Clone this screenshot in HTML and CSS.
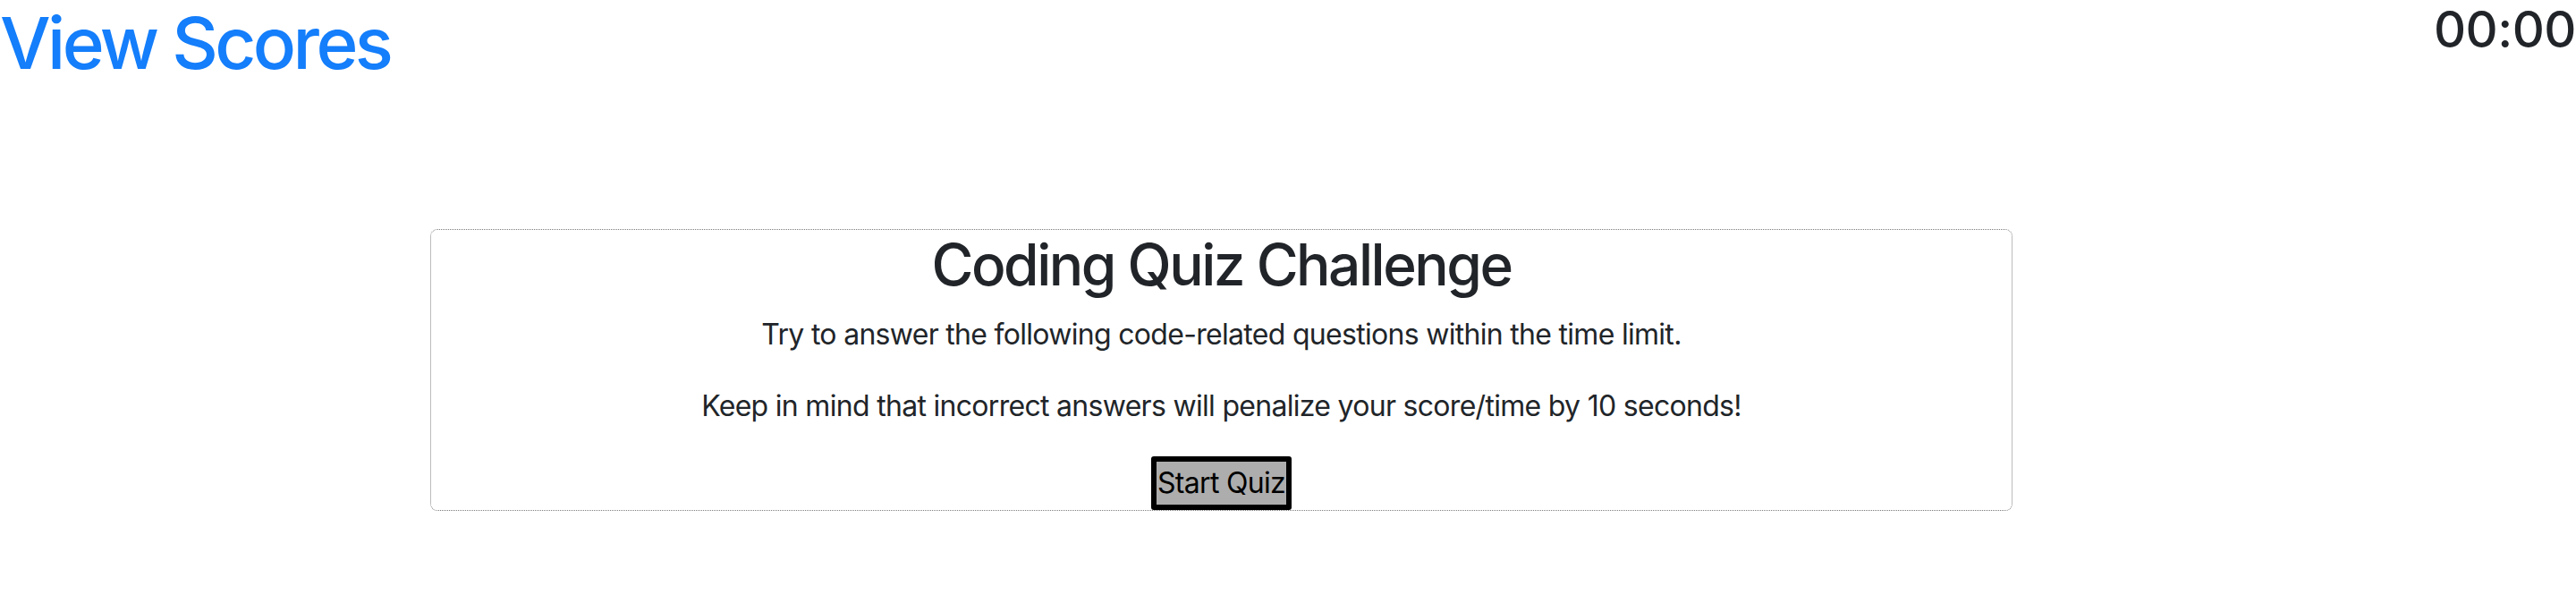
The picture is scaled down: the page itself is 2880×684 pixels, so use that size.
FILE: index.html
```html
<!DOCTYPE html>
<html lang="en">
<head>
<meta charset="utf-8">
<title>Coding Quiz</title>
<link rel="stylesheet" href="styles.css">
</head>
<body>
<header class="topbar">
  <a class="view-scores" href="#">View Scores</a>
  <h3 class="timer">00:00</h3>
</header>
<main class="quiz-card">
  <h2 class="quiz-title">Coding Quiz Challenge</h2>
  <p class="quiz-text">Try to answer the following code-related questions within the time limit.</p>
  <p class="quiz-text">Keep in mind that incorrect answers will penalize your score/time by 10 seconds!</p>
  <button class="start-btn" type="button">Start Quiz</button>
</main>
</body>
</html>
```
FILE: styles.css
```css
html, body {
  margin: 0;
  padding: 0;
  background: #fff;
}
body {
  font-family: Inter, "Noto Sans", "Liberation Sans", sans-serif;
  color: #212529;
  font-size: 32px;
  line-height: 1.5;
}
.topbar {
  display: flex;
  justify-content: space-between;
  align-items: flex-start;
}
.view-scores {
  font-size: 80px;
  line-height: 96px;
  font-weight: 500;
  color: #147efb;
  text-decoration: none;
  letter-spacing: -3.6px;
}
.timer {
  margin: 0;
  font-size: 56px;
  line-height: 67px;
  font-weight: 500;
  letter-spacing: -0.5px;
}
.quiz-card {
  margin: 160px 0 0 481px;
  width: 1767px;
  border: 1px dotted #7a7a7a;
  border-radius: 8px;
  display: flex;
  flex-direction: column;
  align-items: center;
  text-align: center;
}
.quiz-title {
  margin: 0 0 16px;
  font-size: 64px;
  line-height: 77px;
  font-weight: 500;
  letter-spacing: -2.5px;
}
.quiz-text {
  margin: 0 0 32px;
  letter-spacing: -0.7px;
}
.start-btn {
  font-family: inherit;
  font-size: 32px;
  line-height: 48px;
  color: #000;
  background: #adadad;
  border: 6px solid #000;
  border-radius: 3px;
  padding: 0 1px;
  margin: 0;
  white-space: nowrap;
  letter-spacing: -0.7px;
}
```
